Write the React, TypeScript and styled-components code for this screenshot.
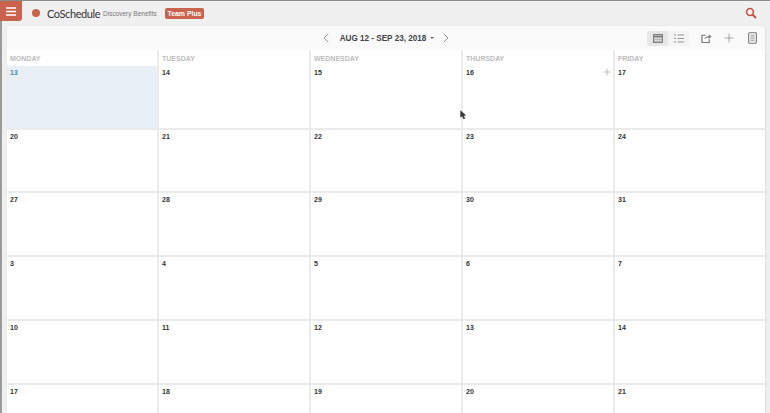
import React from "react";
import styled, { createGlobalStyle } from "styled-components";
import { ChevronLeft, ChevronRight, Plus } from "lucide-react";

const Global = createGlobalStyle`
  html, body { margin: 0; padding: 0; width: 770px; height: 413px; overflow: hidden; background: #f1f0f1; }
  body { font-family: "Liberation Sans", Arial, sans-serif; }
`;

const Page = styled.div`
  position: relative;
  width: 770px;
  height: 413px;
  box-sizing: border-box;
  border-top: 1px solid #8c8c8c;
  overflow: hidden;
  background: #f1f0f1;
  display: flex;
  flex-direction: column;
`;
const LeftEdge = styled.div`
  position: absolute;
  left: 0;
  top: 20px;
  bottom: 0;
  width: 2px;
  background: #9a9a9a;
`;
const TopBar = styled.header`
  height: 25px;
  flex: none;
  display: flex;
  align-items: flex-start;
`;
const MenuButton = styled.button`
  width: 22px;
  height: 20px;
  border: 0;
  padding: 0;
  margin: 0;
  border-radius: 0 0 3px 0;
  background: #c9634e;
  display: flex;
  align-items: center;
  justify-content: center;
`;
const Brand = styled.div`
  display: flex;
  align-items: center;
  height: 24px;
  margin-left: 10px;
  flex: 1;
`;
const BrandDot = styled.span`
  width: 8px;
  height: 8px;
  border-radius: 50%;
  background: #c9634e;
  margin-right: 7px;
`;
const BrandName = styled.span`
  font-family: "Lato", sans-serif;
  font-size: 11px;
  letter-spacing: -0.4px;
  width: 51px;
  white-space: nowrap;
  color: #333;
  margin-right: 5px;
`;
const Project = styled.span`
  font-size: 6.5px;
  color: #777;
  width: 54px;
  white-space: nowrap;
  margin-right: 8px;
  padding-top: 1px;
`;
const Badge = styled.span`
  background: #c9634e;
  color: #fff;
  font-weight: 700;
  font-size: 6.9px;
  height: 11px;
  line-height: 11px;
  padding: 0 2.5px;
  border-radius: 2px;
`;
const SearchBox = styled.div`
  width: 12px;
  height: 12px;
  margin: 4px 13px 0 0;
`;
const Card = styled.main`
  flex: 1;
  margin: 0 4px 0 7px;
  border-radius: 4px 4px 0 0;
  background: #fff;
  border-right: 1px solid #e2e2e2;
  box-shadow: 0 0 2px #ddd;
  display: flex;
  flex-direction: column;
  overflow: hidden;
`;
const Toolbar = styled.div`
  position: relative;
  height: 24px;
  flex: none;
  background: #fafafa;
  display: flex;
  align-items: center;
  justify-content: center;
`;
const RangeNav = styled.div`
  display: flex;
  align-items: center;
  color: #666;
`;
const RangeLabel = styled.span`
  font-size: 8.15px;
  font-weight: 700;
  color: #444;
  margin: 0 4px 0 6px;
`;
const Caret = styled.span`
  width: 0;
  height: 0;
  border-left: 2px solid transparent;
  border-right: 2px solid transparent;
  border-top: 2px solid #666;
  margin-right: 4px;
`;
const Tools = styled.div`
  position: absolute;
  right: 6px;
  top: 4px;
  display: flex;
  align-items: center;
  height: 16px;
`;
const ViewSwitch = styled.div`
  display: flex;
  height: 15px;
  width: 42px;
  background: #f4f4f4;
  border-radius: 2px;
  margin-right: 1px;
`;
const ViewOption = styled.div<{ $active?: boolean }>`
  width: 21px;
  height: 15px;
  display: flex;
  align-items: center;
  justify-content: center;
  background: ${(p) => (p.$active ? "#e6e6e6" : "transparent")};
  border-radius: 2px;
`;
const Tool = styled.div`
  width: 14px;
  height: 14px;
  margin-left: 9px;
  display: flex;
  align-items: center;
  justify-content: center;
  color: #707070;
`;
const WeekHead = styled.div`
  display: grid;
  grid-template-columns: repeat(5, 152px);
  height: 16px;
  flex: none;
`;
const DayName = styled.div`
  font-size: 7px;
  font-weight: 700;
  color: #bcbcbc;
  padding: 5px 0 0 3px;
  border-right: 2px solid #ebebeb;
  box-sizing: border-box;
  line-height: 8px;
  &:last-child { border-right: 0; }
`;
const Grid = styled.div`
  display: grid;
  grid-template-columns: repeat(5, 152px);
  grid-template-rows: 64px 63px repeat(4, 64px);
`;
const Cell = styled.div<{ $today?: boolean }>`
  position: relative;
  box-sizing: border-box;
  border-right: 2px solid #ebebeb;
  border-bottom: 2px solid #ebebeb;
  padding: 3px 3px;
  background: ${(p) => (p.$today ? "#e8f0f6" : "#fff")};
  font-size: 7px;
  font-weight: 700;
  line-height: 8px;
  color: ${(p) => (p.$today ? "#4a8fa8" : "#333")};
  &:nth-child(5n) { border-right: 0; }
`;
const AddDay = styled.span`
  position: absolute;
  right: 1px;
  top: 1px;
  color: #b9c1c5;
  display: flex;
`;
const Cursor = styled.svg`
  position: absolute;
  left: 460px;
  top: 109px;
`;

const weeks = [
  [13, 14, 15, 16, 17],
  [20, 21, 22, 23, 24],
  [27, 28, 29, 30, 31],
  [3, 4, 5, 6, 7],
  [10, 11, 12, 13, 14],
  [17, 18, 19, 20, 21],
];

export default function App() {
  return (
    <Page>
      <Global />
      <LeftEdge />
      <TopBar>
        <MenuButton aria-label="Menu">
          <svg width="12" height="9" viewBox="0 0 12 9">
            <path d="M1 1h10M1 4.500h10M1 8h10" stroke="#fff" strokeWidth="1.400" />
          </svg>
        </MenuButton>
        <Brand>
          <BrandDot />
          <BrandName>CoSchedule</BrandName>
          <Project>Discovery Benefits</Project>
          <Badge>Team Plus</Badge>
        </Brand>
        <SearchBox>
          <svg width="12" height="12" viewBox="0 0 12 12">
            <circle cx="5" cy="5" r="3.400" fill="none" stroke="#bf4f3d" strokeWidth="1.500" />
            <path d="M7.600 7.600L11 11" stroke="#bf4f3d" strokeWidth="2" />
          </svg>
        </SearchBox>
      </TopBar>
      <Card>
        <Toolbar>
          <RangeNav>
            <ChevronLeft size={16} strokeWidth={1} />
            <RangeLabel>AUG 12 - SEP 23, 2018</RangeLabel>
            <Caret />
            <ChevronRight size={16} strokeWidth={1} />
          </RangeNav>
          <Tools>
            <ViewSwitch>
              <ViewOption $active>
                <svg width="10" height="9" viewBox="0 0 10 9">
                  <rect x=".5" y=".5" width="9" height="8" fill="#b5b5b5" stroke="#808080" />
                  <path d="M1 2.500h8" stroke="#777" />
                  <path d="M2 4.500h6M2 6.500h6" stroke="#eee" strokeDasharray="1.500 1" />
                </svg>
              </ViewOption>
              <ViewOption>
                <svg width="10" height="9" viewBox="0 0 10 9">
                  <path d="M0 1h2M0 4.500h2M0 8h2M3.500 1h6.500M3.500 4.500h6.500M3.500 8h6.500" stroke="#999" />
                </svg>
              </ViewOption>
            </ViewSwitch>
            <Tool>
              <svg width="11" height="10" viewBox="0 0 12 11">
                <path d="M5 2.500H1v8h8V7" fill="none" stroke="#777" strokeWidth="1.300" />
                <path d="M3.500 7c.5-2.500 2.500-3.500 5-3.500V1.500L11.500 4 8.500 6.500V5C6.500 5 5 5.500 3.500 7z" fill="#777" />
              </svg>
            </Tool>
            <Tool>
              <Plus size={14} strokeWidth={1} />
            </Tool>
            <Tool>
              <svg width="9" height="12" viewBox="0 0 10 13">
                <rect x=".7" y=".7" width="8.600" height="11.600" rx="1" fill="none" stroke="#777" strokeWidth="1.200" />
                <path d="M2.500 3.500h5M2.500 5.500h5M2.500 7.500h5M2.500 9.500h5" stroke="#999" />
              </svg>
            </Tool>
          </Tools>
        </Toolbar>
        <WeekHead>
          {["MONDAY", "TUESDAY", "WEDNESDAY", "THURSDAY", "FRIDAY"].map((d) => (
            <DayName key={d}>{d}</DayName>
          ))}
        </WeekHead>
        <Grid>
          {weeks.flatMap((week, w) =>
            week.map((day, i) => (
              <Cell key={`${w}-${i}`} $today={w === 0 && i === 0}>
                {day}
                {w === 0 && i === 3 && (
                  <AddDay>
                    <Plus size={10} strokeWidth={2.500} />
                  </AddDay>
                )}
              </Cell>
            ))
          )}
        </Grid>
      </Card>
      <Cursor width="7" height="10" viewBox="0 0 7 10">
        <path d="M.5.5v7l1.700-1.500 1.300 3 1.500-.6-1.300-2.900H6z" fill="#333" stroke="#555" strokeWidth=".4" />
      </Cursor>
    </Page>
  );
}
